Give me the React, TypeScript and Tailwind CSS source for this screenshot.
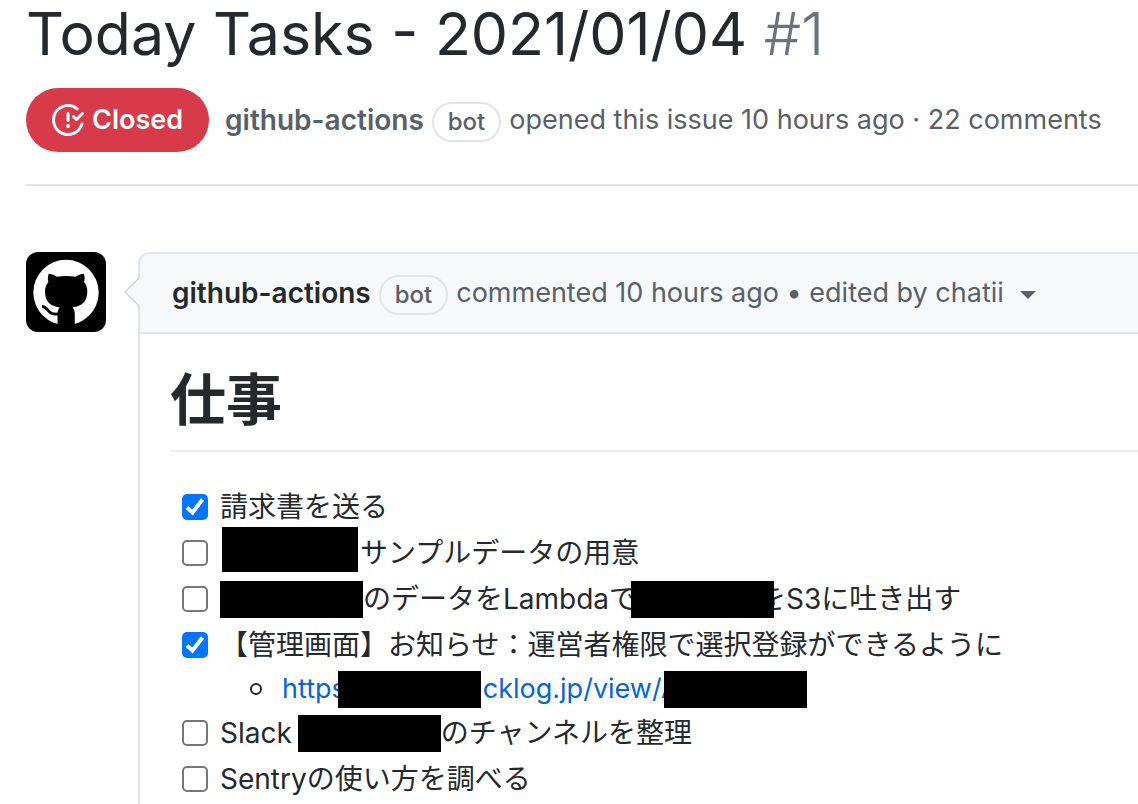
import { ReactNode, useState } from 'react';

type Task = {
  id: string;
  done: boolean;
  content: ReactNode;
  link?: ReactNode;
};

// 伏せ字
function Mask({ className = 'h-[37px] w-[143px]' }: { className?: string }) {
  return <span className={`relative inline-block shrink-0 bg-black ${className}`} />;
}

function BotLabel() {
  return (
    <span className="mx-2 mt-1 inline-flex h-10 items-center rounded-full border-2 border-[#e1e4e8] px-[14px] text-2xl font-medium text-[#586069]">
      bot
    </span>
  );
}

function IssueClosedIcon() {
  return (
    <svg viewBox="0 0 16 16" className="h-8 w-8 fill-current" aria-hidden="true">
      <path d="M1.5 8a6.5 6.5 0 0110.65-5.003.75.75 0 00.959-1.153 8 8 0 102.592 8.33.75.75 0 10-1.444-.407A6.5 6.5 0 011.5 8zM8 12a1 1 0 100-2 1 1 0 000 2zm0-8a.75.75 0 01.75.75v3.5a.75.75 0 11-1.5 0v-3.5A.75.75 0 018 4zm4.78 4.28l3-3a.75.75 0 00-1.06-1.06l-2.47 2.47-.97-.97a.749.749 0 10-1.06 1.06l1.5 1.5a.75.75 0 001.06 0z" />
    </svg>
  );
}

function Avatar() {
  return (
    <a href="#github-actions" aria-label="github-actions" className="h-20 w-20 shrink-0 overflow-hidden rounded-xl bg-black">
      <svg viewBox="0 0 80 80" className="h-20 w-20" aria-hidden="true">
        <circle cx="40" cy="40.500" r="32.700" fill="#fff" />
        {/* 頭と耳 */}
        <path d="M22.700 21.700c3 .1 5.800 1.500 8.300 3.100 6-1.200 12.500-1.200 18.500 0 2.500-1.600 5.300-3 8.300-3.100 1.200 3 1 6 .3 8.300C60.500 33 61.500 36.200 61.300 40c-.3 9.500-5 14.300-14.800 15.400 1.700 1.600 2.300 4 2.300 6.600V80H31.500V62c0-2.600.6-5 2.300-6.600C24 54.300 19.300 49.500 19 40c-.2-3.800 1-7 3.400-10-.7-2.300-.9-5.300.3-8.300z" />
        {/* 尻尾 */}
        <path d="M16 54.500c3.500 0 5 2.500 7 5s5 3 9.500 2.500" fill="none" stroke="#000" strokeWidth="2.800" />
        <path d="M28 72h24v8H28z" />
      </svg>
    </a>
  );
}

const initialTasks: Task[] = [
  { id: 'invoice', done: true, content: '請求書を送る' },
  {
    id: 'sample',
    done: false,
    content: (
      <>
        <Mask className="mr-0.5 -mt-2 ml-0.5 h-[45px] w-[136px]" />
        サンプルデータの用意
      </>
    )
  },
  {
    id: 'lambda',
    done: false,
    content: (
      <>
        <Mask />
        のデータをLambdaで
        <Mask className="-mr-4 -ml-1.5 h-[37px] w-[143px]" />
        をS3に吐き出す
      </>
    )
  },
  {
    id: 'admin',
    done: true,
    content: '【管理画面】お知らせ：運営者権限で選択登録ができるように',
    link: (
      <>
        https
        <Mask className="mr-0.5 -ml-2 h-[37px] w-[143px]" />
        cklog.jp/view/A
        <Mask className="-ml-4 h-[37px] w-[143px]" />
      </>
    )
  },
  {
    id: 'slack',
    done: false,
    content: (
      <>
        Slack&nbsp;
        <Mask className="-ml-0.5 h-[37px] w-[143px]" />
        のチャンネルを整理
      </>
    )
  },
  { id: 'sentry', done: false, content: 'Sentryの使い方を調べる' }
];

export default function App() {
  const [tasks, setTasks] = useState(initialTasks);

  const toggle = (id: string) => {
    setTasks(tasks.map((task) => (task.id === id ? { ...task, done: !task.done } : task)));
  };

  return (
    <main className="flex min-h-screen flex-col bg-white pl-[26px] font-[Inter,'Noto_Sans_CJK_JP',sans-serif] text-[28px] text-[#24292e]">
      <header className="border-b-2 border-[#e1e4e8] pb-8">
        <h1 className="text-[59px] leading-[68px] whitespace-nowrap">
          Today Tasks - 2021/01/04 <span className="font-light text-[#6a737d]">#1</span>
        </h1>
        <div className="mt-5 flex items-center whitespace-nowrap text-[#586069]">
          <span className="mr-4 flex h-16 items-center gap-2 rounded-full bg-[#d73a49] px-[26px] text-[27px] font-semibold text-white">
            <IssueClosedIcon />
            Closed
          </span>
          <a href="#github-actions" className="font-semibold">
            github-actions
          </a>
          <BotLabel />
          <span className="text-[27px]">opened this issue 10 hours ago · 22 comments</span>
        </div>
      </header>

      <div className="mt-[66px] flex flex-1 items-start gap-8">
        <Avatar />
        <article className="relative min-w-0 flex-1 self-stretch rounded-tl-xl border-t-2 border-l-2 border-[#e1e4e8]">
          <svg viewBox="0 0 16 32" className="absolute top-[22px] -left-4 h-8 w-4" aria-hidden="true">
            <path d="M16 1 1 16l15 15" fill="#f6f8fa" stroke="#d1d5da" strokeWidth="1.500" />
          </svg>
          <div className="flex h-20 items-center rounded-tl-[10px] border-b-2 border-[#e1e4e8] bg-[#f6f8fa] pl-8 whitespace-nowrap text-[#586069]">
            <a href="#github-actions" className="font-semibold text-[#24292e]">
              github-actions
            </a>
            <BotLabel />
            <span className="text-[27px]">commented 10 hours ago&nbsp;•&nbsp;</span>
            <button type="button" className="flex items-center gap-4 text-[27px]">
              edited by chatii
              <svg viewBox="0 0 16 8" className="mt-1 h-2 w-4 fill-current" aria-hidden="true">
                <path d="M0 0h16L8 8z" />
              </svg>
            </button>
          </div>

          <div className="pt-8 pl-[30px]">
            <h2 className="border-b-2 border-[#eaecef] pb-4 text-[56px] leading-[68px] font-bold">仕事</h2>
            <ul className="mt-8 pl-3 whitespace-nowrap">
              {tasks.map((task) => (
                <li key={task.id}>
                  <label className="flex h-[46px] items-center">
                    <span className="relative mr-3 flex h-[26px] w-[26px] shrink-0">
                      <input
                        type="checkbox"
                        checked={task.done}
                        onChange={() => toggle(task.id)}
                        className="h-full w-full appearance-none rounded-[5px] border-2 border-[#767676] bg-white checked:border-[#0075ff] checked:bg-[#0075ff]"
                      />
                      {task.done && (
                        <svg viewBox="0 0 26 26" className="pointer-events-none absolute inset-0" aria-hidden="true">
                          <path d="M5 13.500l5.500 5L20.500 5.500" fill="none" stroke="#fff" strokeWidth="4" />
                        </svg>
                      )}
                    </span>
                    {task.content}
                  </label>
                  {task.link && (
                    <ul className="pl-[68px]">
                      <li className="flex h-[42px] items-center gap-5">
                        <span className="h-3 w-3 rounded-full border-2 border-[#24292e]" />
                        <a href="#view" className="flex items-center text-[27px] text-[#0366d6]">
                          {task.link}
                        </a>
                      </li>
                    </ul>
                  )}
                </li>
              ))}
            </ul>
          </div>
        </article>
      </div>
    </main>
  );
}
